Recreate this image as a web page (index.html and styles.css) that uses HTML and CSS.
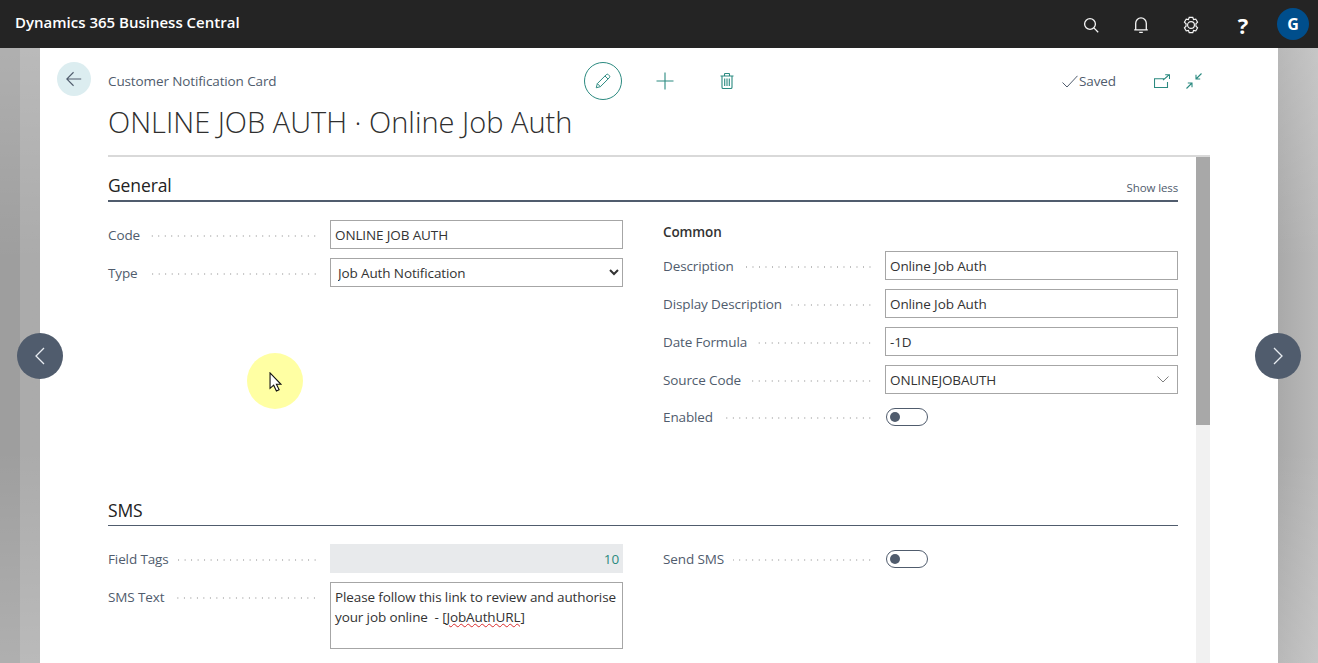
FILE: index.html
```html
<!DOCTYPE html>
<html lang="en">
<head>
    <meta charset="UTF-8">
    <meta name="viewport" content="width=device-width, initial-scale=1.0">
    <title>Customer Notification Card</title>
    <link rel="stylesheet" href="styles.css">
</head>
<body>

    <header class="topbar">
        <div class="brand">Dynamics 365 Business Central</div>
        <div class="top-icons">
            <svg class="top-icon" viewBox="0 0 18 18"><circle cx="8" cy="8" r="5.400"/><path d="M11.900 11.900l4.300 4.300"/></svg>
            <svg class="top-icon" viewBox="0 0 18 18"><path d="M3.700 13.800V7.200a5.300 5.300 0 0 1 10.600 0v6.600zM2.200 13.800h13.600M7.200 16.300h3.600"/></svg>
            <svg class="top-icon" viewBox="0 0 20 20"><path d="M8 1.500h4l.8 2.500 2.500-.6 2 3.400-1.800 1.900v2.600l1.800 1.900-2 3.400-2.500-.6-.8 2.500H8l-.8-2.500-2.500.6-2-3.400 1.800-1.900V8.700L2.700 6.800l2-3.400 2.500.6z"/><circle cx="10" cy="10" r="3.800"/></svg>
            <div class="help">?</div>
            <div class="avatar">G</div>
        </div>
    </header>

    <div class="stage">
        <main class="panel">
            <div class="card-head">
                <button class="back">
                    <svg viewBox="0 0 20 20"><path d="M18 10H2M9.500 2.500L2 10l7.500 7.500"/></svg>
                </button>
                <div class="head-main">
                    <div class="head-row">
                        <div class="caption">Customer Notification Card</div>
                        <div class="tools">
                            <div class="edit-btn">
                                <svg class="tool-icon" viewBox="0 0 20 20"><path d="M2.500 17.500l1.200-4.600L13.600 3a1.700 1.700 0 0 1 2.400 0l1 1a1.700 1.700 0 0 1 0 2.400l-9.900 9.900zM3.700 12.900l3.400 3.400M12.200 4.400l3.400 3.400"/></svg>
                            </div>
                            <svg class="tool-icon plus" viewBox="0 0 18 18"><path d="M9 0.500v17M0.500 9h17"/></svg>
                            <svg class="tool-icon trash" viewBox="0 0 14 16"><path d="M0.500 3h13M2 3v11.200c0 .7.500 1.300 1.200 1.300h7.600c.7 0 1.200-.6 1.200-1.300V3M4.500 3V1.200c0-.4.300-.7.700-.7h3.600c.4 0 .7.300.7.700V3M4.700 5.500v7.500M7 5.500v7.500M9.300 5.500v7.500"/></svg>
                        </div>
                        <div class="status">
                            <svg class="check" viewBox="0 0 16 13"><path d="M0.500 7.500l4.500 4.500L15.500 0.800"/></svg>
                            <span>Saved</span>
                        </div>
                        <div class="win-tools">
                            <svg class="tool-icon" viewBox="0 0 16 14"><path d="M11 4.700H0.500v8.800h13V8M9 6.200L15 1M11.200 0.700h4.300V5"/></svg>
                            <svg class="tool-icon" viewBox="0 0 16 16"><path d="M15.500 0.500L10 6M10 1.800V6h4.200M0.500 15.500L6 10M1.800 10H6v4.200"/></svg>
                        </div>
                    </div>
                    <h1 class="title">ONLINE JOB AUTH &middot; Online Job Auth</h1>
                </div>
            </div>

            <div class="card-body">
                <div class="content">
                    <section class="group">
                        <div class="group-head strong">
                            <h2>General</h2>
                            <span class="show-less">Show less</span>
                        </div>
                        <div class="columns">
                            <div class="col">
                                <label class="field">
                                    <span class="label">Code</span><span class="dots"></span>
                                    <input class="input" type="text" value="ONLINE JOB AUTH">
                                </label>
                                <label class="field">
                                    <span class="label">Type</span><span class="dots"></span>
                                    <select class="input select">
                                        <option>Job Auth Notification</option>
                                    </select>
                                </label>
                            </div>
                            <div class="col">
                                <h3 class="sub">Common</h3>
                                <label class="field">
                                    <span class="label">Description</span><span class="dots"></span>
                                    <input class="input" type="text" value="Online Job Auth">
                                </label>
                                <label class="field">
                                    <span class="label">Display Description</span><span class="dots"></span>
                                    <input class="input" type="text" value="Online Job Auth">
                                </label>
                                <label class="field">
                                    <span class="label">Date Formula</span><span class="dots"></span>
                                    <input class="input" type="text" value="-1D">
                                </label>
                                <div class="field">
                                    <span class="label">Source Code</span><span class="dots"></span>
                                    <div class="input lookup">
                                        <span>ONLINEJOBAUTH</span>
                                        <svg viewBox="0 0 12 7"><path d="M0.500 0.500L6 6l5.500-5.500"/></svg>
                                    </div>
                                </div>
                                <div class="field toggle-field">
                                    <span class="label">Enabled</span><span class="dots"></span>
                                    <div class="toggle"><i></i></div>
                                </div>
                            </div>
                        </div>
                    </section>

                    <section class="group sms">
                        <div class="group-head">
                            <h2>SMS</h2>
                        </div>
                        <div class="columns">
                            <div class="col">
                                <div class="field">
                                    <span class="label">Field Tags</span><span class="dots"></span>
                                    <div class="input readonly">10</div>
                                </div>
                                <div class="field top">
                                    <span class="label">SMS Text</span><span class="dots"></span>
                                    <div class="input memo">Please follow this link to review and authorise your job online &nbsp;- <span class="typo">[JobAuthURL]</span></div>
                                </div>
                            </div>
                            <div class="col">
                                <div class="field toggle-field">
                                    <span class="label">Send SMS</span><span class="dots"></span>
                                    <div class="toggle"><i></i></div>
                                </div>
                            </div>
                        </div>
                    </section>
                </div>
                <div class="scrollbar"><div class="thumb"></div></div>
            </div>
        </main>
    </div>

    <button class="nav-arrow prev"><svg viewBox="0 0 10 18"><path d="M9 1L1 9l8 8"/></svg></button>
    <button class="nav-arrow next"><svg viewBox="0 0 10 18"><path d="M1 1l8 8-8 8"/></svg></button>

    <div class="pointer">
        <svg viewBox="0 0 14 22"><path d="M1 1v17l4-3.500 3 6.500 3-1.500-3-6h5z"/></svg>
    </div>

</body>
</html>
```

FILE: styles.css
```css
* {
    box-sizing: border-box;
}

html, body {
    height: 100%;
}

body {
    margin: 0;
    height: 663px;
    overflow: hidden;
    display: flex;
    flex-direction: column;
    font-family: 'Open Sans', 'Noto Sans', sans-serif;
    font-size: 13.5px;
    letter-spacing: -0.12px;
    color: #333;
    /* dimmed page behind the card: lighter at top and bottom */
    background:
        linear-gradient(to bottom, rgba(255, 255, 255, 0.18) 48px, rgba(255, 255, 255, 0) 260px, rgba(255, 255, 255, 0) 450px, rgba(255, 255, 255, 0.18) 663px),
        linear-gradient(to right, #9e9e9e 0, #9e9e9e 20px, #ababab 20px, #a9a9a9 1278px, #bababa 1318px);
}

/* top bar */
.topbar {
    height: 48px;
    flex: none;
    display: flex;
    align-items: center;
    justify-content: space-between;
    padding: 0 9px 0 15px;
    background-color: #242424;
    color: white;
}

.brand {
    font-size: 15px;
    font-weight: 600;
    letter-spacing: 0;
    margin-top: -4px;
}

.top-icons {
    display: flex;
    align-items: center;
}

.top-icon {
    width: 18px;
    height: 18px;
    margin: 2px 32px 0 0;
    fill: none;
    stroke: #f5f5f5;
    stroke-width: 1.3;
}

.help {
    width: 18px;
    margin: 2px 25px 0 2px;
    text-align: center;
    font-size: 22px;
    font-weight: 700;
    line-height: 24px;
    letter-spacing: 0;
}

.avatar {
    width: 32px;
    height: 32px;
    border-radius: 50%;
    background-color: #004e8c;
    text-align: center;
    line-height: 32px;
    font-size: 16px;
    font-weight: 700;
    letter-spacing: 0;
}

/* card */
.stage {
    flex: 1;
    padding: 0 40px;
    min-height: 0;
}

.panel {
    height: 100%;
    background-color: white;
    padding-right: 68px;
}

.card-head {
    display: flex;
    align-items: flex-start;
    padding: 14px 0 0 17px;
}

.back {
    width: 34px;
    height: 34px;
    flex: none;
    padding: 0;
    margin-right: 17px;
    border: none;
    border-radius: 50%;
    background-color: #dcedf0;
    display: flex;
    align-items: center;
    justify-content: center;
}

.back svg {
    width: 18px;
    height: 18px;
    fill: none;
    stroke: #505c6d;
    stroke-width: 1.2;
}

.head-main {
    flex: 1;
    height: 95px;
    border-bottom: 2px solid #d9d9d9;
}

.head-row {
    display: flex;
    align-items: center;
    height: 38px;
}

.caption {
    width: 476px;
    color: #505c6d;
}

.tools {
    display: flex;
    align-items: center;
}

.edit-btn {
    width: 38px;
    height: 38px;
    border: 1px solid #2b8a80;
    border-radius: 50%;
    display: flex;
    align-items: center;
    justify-content: center;
}

.tool-icon {
    width: 18px;
    height: 18px;
    fill: none;
    stroke: #2b8a80;
    stroke-width: 1.1;
}

.plus {
    margin-left: 34px;
}

.trash {
    width: 14px;
    height: 16px;
    margin-left: 46px;
}

.status {
    display: flex;
    align-items: center;
    margin-left: 328px;
    color: #505c6d;
}

.check {
    width: 16px;
    height: 13px;
    margin-right: 1px;
    fill: none;
    stroke: #505c6d;
    stroke-width: 1;
}

.win-tools {
    display: flex;
    align-items: center;
    gap: 16px;
    margin-left: 38px;
}

.win-tools .tool-icon {
    width: 16px;
    height: 16px;
}

.title {
    margin: 2px 0 0;
    font-size: 29px;
    font-weight: 300;
    line-height: 40px;
    letter-spacing: 0;
    color: #2f2f2f;
}

.card-body {
    display: flex;
    padding-left: 68px;
    height: 506px;
    overflow: hidden;
}

.content {
    width: 1070px;
    flex: none;
    margin-right: 18px;
}

.scrollbar {
    width: 14px;
    flex: none;
    background-color: #f1f1f1;
}

.thumb {
    height: 268px;
    background-color: #a8a8a8;
}

/* sections */
.group-head {
    height: 40px;
    display: flex;
    align-items: flex-end;
    justify-content: space-between;
    border-bottom: 1px solid #505c6d;
    padding-bottom: 3px;
}

.group-head.strong {
    height: 45px;
    border-bottom-width: 2px;
}

.group-head h2 {
    margin: 0;
    font-size: 17.5px;
    font-weight: 500;
    line-height: 24px;
    color: #222;
}

.show-less {
    margin-bottom: 2px;
    font-size: 11.5px;
    color: #505c6d;
}

.columns {
    display: grid;
    grid-template-columns: 515px 515px;
    column-gap: 40px;
    padding-top: 18px;
}

.group {
    height: 329px;
}

.sub {
    margin: 3px 0 0;
    height: 28px;
    line-height: 19px;
    font-size: 13.5px;
    font-weight: 600;
    color: #333;
}

.field {
    display: flex;
    align-items: center;
    margin-bottom: 9px;
    min-height: 29px;
    font: inherit;
}

.field.top {
    align-items: flex-start;
}

.field.top .label {
    margin-top: 6px;
}

.field.top .dots {
    margin-top: 15px;
}

.label {
    color: #505c6d;
    white-space: nowrap;
    line-height: 18px;
}

.dots {
    flex: 1;
    height: 2px;
    margin: 2px 12px 0 9px;
    background-image: radial-gradient(circle, #bdbdbd 0.8px, transparent 1px);
    background-size: 6.5px 2px;
    background-position: right center;
}

.input {
    width: 293px;
    height: 29px;
    flex: none;
    padding: 0 4px;
    border: 1px solid #a6a6a6;
    border-radius: 0;
    background-color: white;
    font-family: inherit;
    font-size: 13.5px;
    letter-spacing: -0.12px;
    color: #333;
    outline: none;
}

.select {
    padding-left: 3px;
}

.lookup {
    display: flex;
    align-items: center;
    justify-content: space-between;
    padding-right: 8px;
}

.lookup svg {
    width: 12px;
    height: 7px;
    fill: none;
    stroke: #808080;
    stroke-width: 1;
}

.readonly {
    border: none;
    background-color: #e8eaec;
    color: #2b8a80;
    text-align: right;
    line-height: 30px;
}

.memo {
    height: 67px;
    line-height: 20px;
    padding-top: 4px;
}

.typo {
    text-decoration: underline wavy #d92b2b 1px;
}

.toggle-field {
    min-height: 18px;
    margin-top: 14px;
}

.toggle {
    position: relative;
    width: 42px;
    height: 18px;
    margin: 0 250px 0 1px;
    border: 1px solid #505c6d;
    border-radius: 9px;
}

.toggle i {
    position: absolute;
    left: 3px;
    top: 3px;
    width: 10px;
    height: 10px;
    border-radius: 50%;
    background-color: #505c6d;
}

.sms .col:last-child .toggle-field {
    margin-top: 6px;
}

/* carousel arrows sit over the page */
.nav-arrow {
    position: absolute;
    top: 333px;
    width: 46px;
    height: 46px;
    padding: 0;
    border: none;
    border-radius: 50%;
    background-color: #505c6d;
    display: flex;
    align-items: center;
    justify-content: center;
}

.nav-arrow svg {
    width: 10px;
    height: 18px;
    fill: none;
    stroke: #e8edf2;
    stroke-width: 1.3;
}

.prev {
    left: 17px;
}

.next {
    left: 1255px;
}

/* recorded mouse pointer */
.pointer {
    position: absolute;
    left: 247px;
    top: 353px;
    width: 56px;
    height: 56px;
    border-radius: 50%;
    background-color: #ffffa3;
}

.pointer svg {
    position: absolute;
    left: 22px;
    top: 19px;
    width: 13px;
    height: 20px;
    fill: white;
    stroke: #111;
    stroke-width: 1.2;
}
```
